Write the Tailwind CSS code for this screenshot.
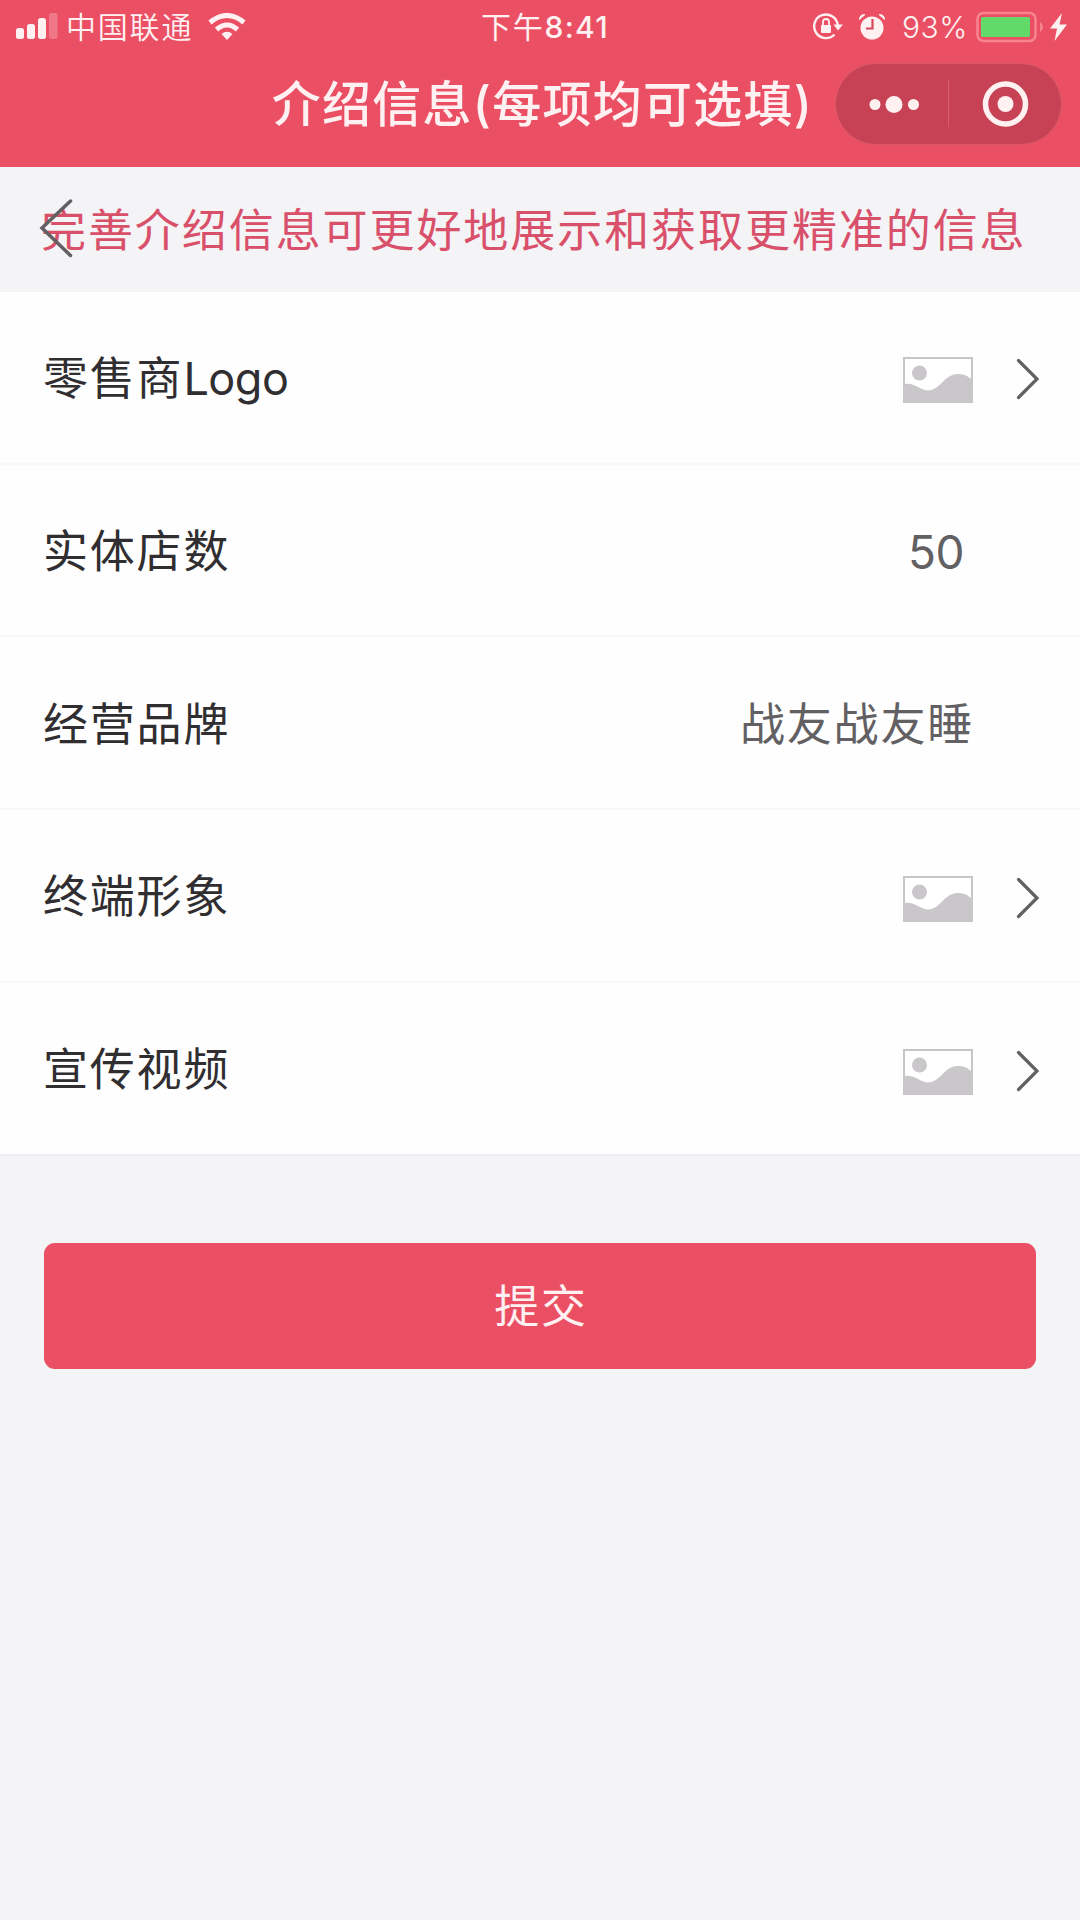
<!DOCTYPE html>
<html lang="zh-CN">
<head>
<meta charset="utf-8">
<title>介绍信息</title>
<script src="https://cdn.jsdelivr.net/npm/@tailwindcss/browser@4"></script>
</head>
<body class="h-[1920px] w-[1080px] overflow-hidden bg-[#f4f3f5] font-['Inter','Noto_Sans_CJK_SC',sans-serif]">
<svg class="hidden">
  <symbol id="picture" viewBox="0 0 70 46">
    <path d="M1 1H69V45H1Z" fill="#fff" stroke="#c7c5c7" stroke-width="2"/>
    <circle cx="16.500" cy="16" r="7.500" fill="#c9c7c9"/>
    <path d="M1 27C11 25 17 33 25 33.500C38 33 41 17 55 17C61 17 65 19 69 23V45H1Z" fill="#c9c7c9"/>
  </symbol>
  <symbol id="chevron" viewBox="0 0 24 42">
    <path d="M2.500 2.500L21 21L2.500 39.500" fill="none" stroke="#626063" stroke-width="3.200" stroke-linecap="round"/>
  </symbol>
</svg>
<header class="h-[167px] bg-[#eb4f63] text-[#fff1f2]">
  <div class="grid h-[54px] grid-cols-[466px_1fr_466px] items-center">
    <div class="flex items-center pl-[15px]">
      <svg class="h-7 w-[44px]" viewBox="0 0 44 28" fill="currentColor"><rect x="1" y="15" width="8" height="11" rx="2.500"/><rect x="12" y="11" width="8" height="15" rx="2.500"/><rect x="23" y="5" width="8" height="21" rx="2.500"/><rect x="34" y="0" width="8.500" height="26" rx="2.500" opacity=".25"/></svg>
      <span class="ml-[7px] text-[30px] leading-[54px] tracking-[1.800px] font-[350]">中国联通</span>
      <svg class="ml-[15px] h-[28px] w-[38px]" viewBox="0 0 38 28" fill="none" stroke="currentColor" stroke-width="5"><path d="M2 9.500Q19 -4.500 36 9.500"/><path d="M8.500 16.500Q19 7.500 29.500 16.500"/><path d="M13.500 21Q19 16.500 24.500 21L19 27Z" fill="currentColor" stroke="none"/></svg>
    </div>
    <div class="flex items-center justify-center pl-[10px] leading-[54px] whitespace-nowrap"><span class="text-[30px] tracking-[1.800px]">下午</span><span class="text-[30px] font-medium tracking-[1.300px]">8:41</span></div>
    <div class="flex items-center justify-end pr-[13px]">
      <svg class="h-[28px] w-[31px]" viewBox="0 0 31 28" fill="none" stroke="currentColor"><path d="M25.700 12A11.800 11.800 0 1 0 22.500 21.500" stroke-width="2.400"/><path d="M21.500 11.500H31L26 17.500Z" fill="currentColor" stroke="none"/><rect x="9" y="12" width="10" height="8" rx="1" fill="currentColor" stroke="none"/><path d="M11 12V9a3 3 0 0 1 6 0V12" stroke-width="1.800"/></svg>
      <svg class="ml-[16px] h-[28px] w-[26px]" viewBox="0 0 26 28"><circle cx="13" cy="15" r="11.500" fill="currentColor"/><path d="M0.500 6.500Q0.500 1.500 6 1.500ZM25.500 6.500Q25.500 1.500 20 1.500Z" fill="currentColor" stroke="currentColor"/><path d="M13.500 6V15.500H7" fill="none" stroke="#d8485b" stroke-width="2.200"/></svg>
      <span class="ml-[17px] w-[66px] text-[30px] leading-[54px] font-light tracking-[0.500px]">93%</span>
      <svg class="ml-[7px] h-[32px] w-[68px]" viewBox="0 0 68 32"><rect x="2.500" y="2" width="58" height="28" rx="6" fill="none" stroke="#f7858f" stroke-width="2.500"/><rect x="6" y="6" width="49" height="20" rx="1.500" fill="#62da69"/><path d="M65 11Q68 13 68 16Q68 19 65 21Z" fill="#f7858f"/></svg>
      <svg class="ml-[7px] h-[28px] w-[17px]" viewBox="0 0 17 28" fill="currentColor"><path d="M12 0L0 15.500H7L4.500 28L17 11.500H9.500Z"/></svg>
    </div>
  </div>
  <div class="flex h-[100px] items-center justify-end pr-[18px]">
    <h1 class="mr-[22px] pt-[2px] text-[49px] leading-[80px] font-medium tracking-[1.250px] whitespace-nowrap">介绍信息(每项均可选填)</h1>
    <div class="flex h-[82px] w-[227px] items-center rounded-full border border-[#d95a69] bg-[#c74254]">
      <svg class="h-[80px] w-[224px]" viewBox="0 0 224 80" fill="currentColor"><circle cx="39" cy="40.500" r="5.500"/><circle cx="58" cy="40.500" r="8.500"/><circle cx="77.500" cy="40.500" r="5.500"/><path d="M112.500 16V63" stroke="#d6606e"/><circle cx="169.500" cy="40" r="20" fill="none" stroke="currentColor" stroke-width="5.500"/><circle cx="169.500" cy="40" r="8"/></svg>
    </div>
  </div>
</header>
<main>
  <div class="relative flex h-[125px] items-center pl-[41px]">
    <p class="pt-[2px] text-[45px] leading-[80px] tracking-[1.930px] whitespace-nowrap text-[#d9506b]">完善介绍信息可更好地展示和获取更精准的信息</p>
    <svg class="absolute top-[31px] left-[39px] h-[60px] w-[36px]" viewBox="0 0 36 60"><path d="M31.500 3L3 30L31.500 57.500" fill="none" stroke="#626063" stroke-width="3.500" stroke-linecap="round"/></svg>
  </div>
  <ul class="bg-[#fefefe] text-[45px] tracking-[1.800px] text-[#302e31]">
    <li class="flex h-[173px] items-center border-b-2 border-[#f8f7f9] pt-[2px] pr-[40px] pl-[43px]"><span class="flex-1">零售商<span class="tracking-[-0.500px]">Logo</span></span><svg class="mr-[43px] mt-[3px] h-[46px] w-[70px]"><use href="#picture"/></svg><svg class="mt-[1px] h-[42px] w-[24px]"><use href="#chevron"/></svg></li>
    <li class="flex h-[172px] items-center border-b-2 border-[#f8f7f9] pt-[4px] pr-[116px] pl-[43px]"><span class="flex-1">实体店数</span><span class="text-[46px] tracking-[-0.500px] text-[#626063]">50</span></li>
    <li class="flex h-[173px] items-center border-b-2 border-[#f8f7f9] pt-[4px] pr-[106px] pl-[43px]"><span class="flex-1">经营品牌</span><span class="text-[#626063]">战友战友睡</span></li>
    <li class="flex h-[173px] items-center border-b-2 border-[#f8f7f9] pt-[3px] pr-[40px] pl-[43px]"><span class="flex-1">终端形象</span><svg class="mr-[43px] mt-[3px] h-[46px] w-[70px]"><use href="#picture"/></svg><svg class="mt-[1px] h-[42px] w-[24px]"><use href="#chevron"/></svg></li>
    <li class="flex h-[173px] items-center border-b-2 border-[#efeef0] pt-[3px] pr-[40px] pl-[43px]"><span class="flex-1">宣传视频</span><svg class="mr-[43px] mt-[3px] h-[46px] w-[70px]"><use href="#picture"/></svg><svg class="mt-[1px] h-[42px] w-[24px]"><use href="#chevron"/></svg></li>
  </ul>
  <div class="px-[44px] pt-[87px]">
    <button class="h-[126px] w-full rounded-[11px] bg-[#eb4f63] pt-[2px] pl-[2px] text-[45px] tracking-[1.800px] text-[#fff1f2]">提交</button>
  </div>
</main>
</body>
</html>
